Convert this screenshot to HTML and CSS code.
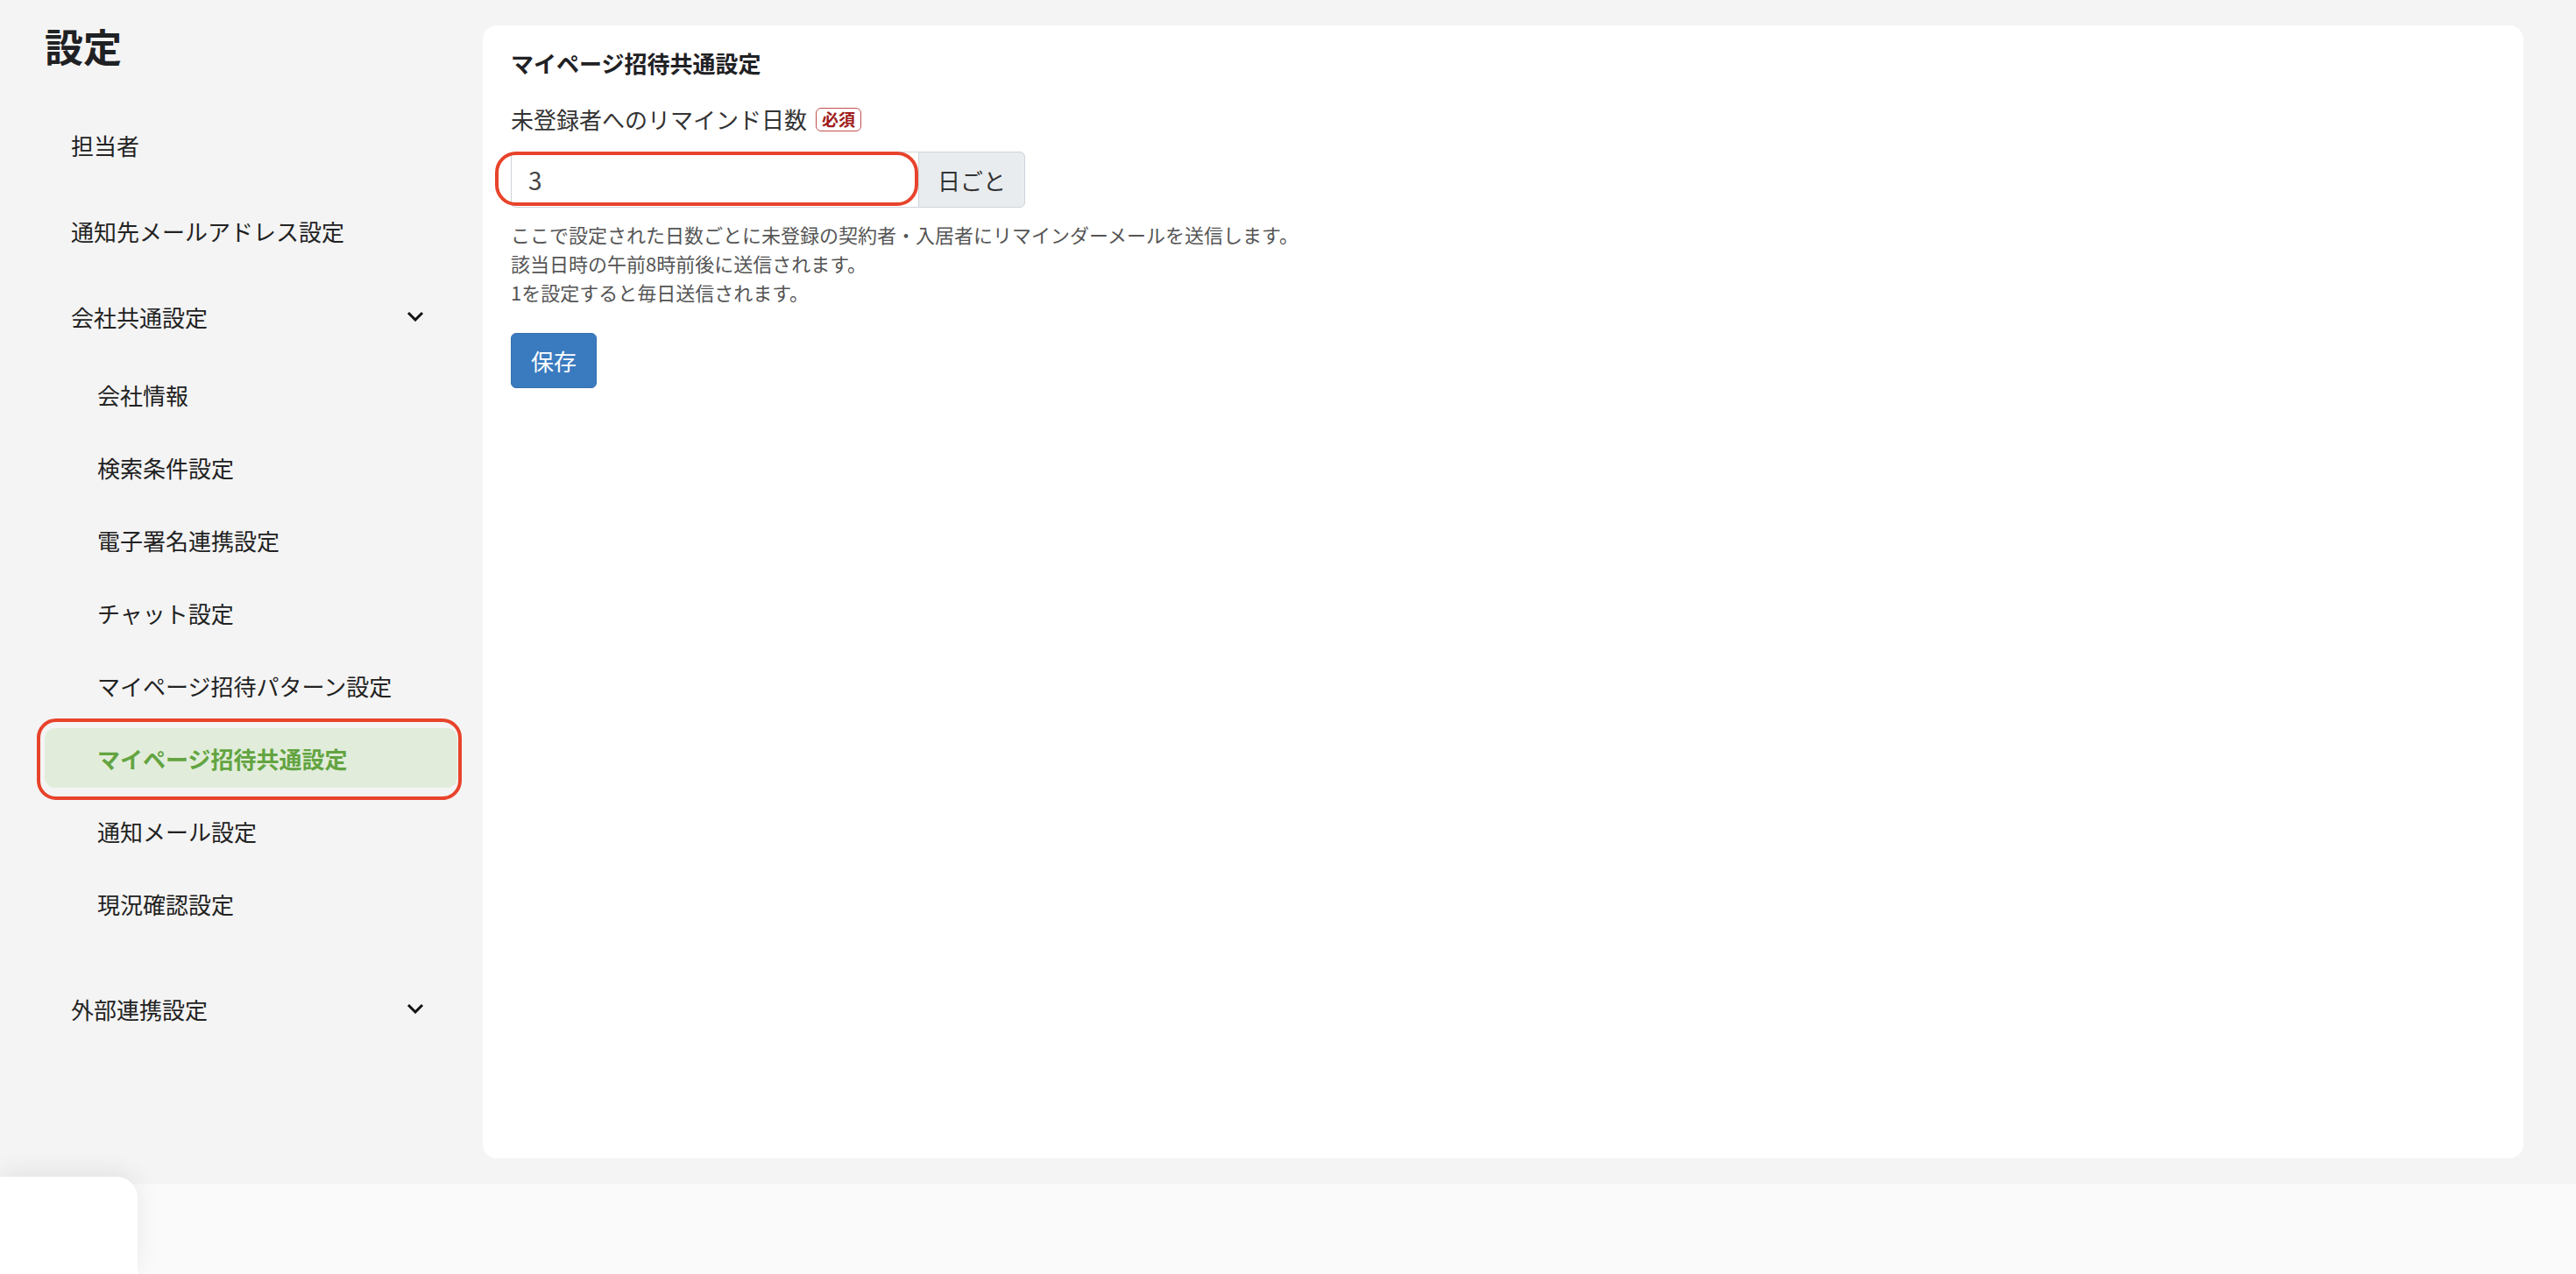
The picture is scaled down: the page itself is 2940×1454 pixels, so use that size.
FILE: index.html
```html
<!DOCTYPE html>
<html lang="ja">

<head>
    <meta charset="utf-8">
    <meta name="viewport" content="width=device-width, initial-scale=1.0">
    <title>設定</title>
    <link rel="stylesheet" href="styles.css">
</head>

<body>
    <div class="layout">
        <aside class="sidebar">
            <h1 class="sidebar-title">設定</h1>
            <ul class="nav">
                <li><a class="nav-item">担当者</a></li>
                <li><a class="nav-item">通知先メールアドレス設定</a></li>
                <li class="nav-group">
                    <a class="nav-item nav-toggle">会社共通設定
                        <svg class="chevron" width="20" height="12" viewBox="0 0 20 12">
                            <polyline points="2,2 10,10 18,2" />
                        </svg>
                    </a>
                    <ul class="subnav">
                        <li><a class="nav-item">会社情報</a></li>
                        <li><a class="nav-item">検索条件設定</a></li>
                        <li><a class="nav-item">電子署名連携設定</a></li>
                        <li><a class="nav-item">チャット設定</a></li>
                        <li><a class="nav-item">マイページ招待パターン設定</a></li>
                        <li><a class="nav-item active">マイページ招待共通設定</a></li>
                        <li><a class="nav-item">通知メール設定</a></li>
                        <li><a class="nav-item">現況確認設定</a></li>
                    </ul>
                </li>
                <li class="nav-group">
                    <a class="nav-item nav-toggle">外部連携設定
                        <svg class="chevron" width="20" height="12" viewBox="0 0 20 12">
                            <polyline points="2,2 10,10 18,2" />
                        </svg>
                    </a>
                </li>
            </ul>
        </aside>

        <main class="content">
            <section class="card">
                <h2 class="card-title">マイページ招待共通設定</h2>

                <div class="field-label">
                    未登録者へのリマインド日数
                    <span class="badge">必須</span>
                </div>

                <div class="input-group">
                    <div class="input-wrap">
                        <input class="input" type="text" value="3">
                    </div>
                    <span class="addon">日ごと</span>
                </div>

                <p class="help">
                    ここで設定された日数ごとに未登録の契約者・入居者にリマインダーメールを送信します。<br>
                    該当日時の午前8時前後に送信されます。<br>
                    1を設定すると毎日送信されます。
                </p>

                <button class="btn">保存</button>
            </section>
        </main>
    </div>

    <footer class="footer">
        <div class="footer-tab"></div>
    </footer>
</body>

</html>
```

FILE: styles.css
```css
html,
body {
    margin: 0;
    height: 100%;
    overflow: hidden;
}

body {
    background-color: #f4f4f4;
    font-family: "Noto Sans CJK JP", "Noto Sans", sans-serif;
    color: #222;
}

.layout {
    display: flex;
    height: 1351px;
}

/* sidebar */

.sidebar {
    width: 551px;
    box-sizing: border-box;
    padding: 30px 29px 0 51px;
    flex-shrink: 0;
}

.sidebar-title {
    margin: 0 0 57px;
    font-size: 44px;
    line-height: 44px;
    font-weight: 700;
    color: #1f2124;
}

.nav,
.subnav {
    list-style: none;
    margin: 0;
    padding: 0;
}

.nav > li {
    margin-bottom: 30px;
}

.nav-item {
    display: flex;
    align-items: center;
    justify-content: space-between;
    height: 68px;
    padding: 0 38px 0 30px;
    border-radius: 12px;
    font-size: 26px;
    color: #222;
    cursor: pointer;
}

.nav-group .nav-toggle {
    margin-bottom: 21px;
}

.chevron {
    fill: none;
    stroke: #111;
    stroke-width: 3;
}

.nav .subnav {
    padding-bottom: 22px;
}

.subnav li {
    margin-bottom: 15px;
}

.subnav li:last-child {
    margin-bottom: 0;
}

.subnav .nav-item {
    padding-left: 60px;
}

.nav-item.active {
    position: relative;
    background-color: #e1edda;
    color: #63a441;
    font-weight: 700;
}

/* red annotation ring */
.nav-item.active::after {
    content: "";
    position: absolute;
    top: -11px;
    bottom: -14px;
    left: -9px;
    right: -5px;
    border: 4px solid #e8432b;
    border-radius: 22px;
}

/* main card */

.content {
    flex: 1;
    display: flex;
    padding: 29px 60px 29px 0;
}

.card {
    flex: 1;
    background-color: #fff;
    border-radius: 16px;
    padding: 25px 32px;
}

.card-title {
    margin: 0;
    font-size: 26px;
    line-height: 36px;
    font-weight: 700;
    color: #1f2124;
}

.field-label {
    display: flex;
    align-items: center;
    margin-top: 28px;
    font-size: 26px;
    line-height: 36px;
    color: #333;
}

.badge {
    box-sizing: border-box;
    height: 27px;
    margin-left: 10px;
    padding: 0 6px;
    border: 1.5px solid #c0504d;
    border-radius: 6px;
    font-size: 19px;
    line-height: 24px;
    font-weight: 700;
    color: #a01c1c;
}

.input-group {
    display: flex;
    margin-top: 19px;
    height: 64px;
}

.input-wrap {
    position: relative;
    width: 465px;
}

.input-wrap::after {
    content: "";
    position: absolute;
    top: 0;
    bottom: 2px;
    left: -18px;
    right: 0;
    border: 4px solid #e8432b;
    border-radius: 24px;
    pointer-events: none;
}

.input {
    box-sizing: border-box;
    width: 100%;
    height: 100%;
    margin: 0;
    padding: 0 19px;
    border: 1px solid #ced4da;
    border-right: none;
    border-radius: 6px 0 0 6px;
    background-color: #fff;
    font-family: inherit;
    font-size: 28px;
    color: #444;
    outline: none;
}

.addon {
    box-sizing: border-box;
    width: 122px;
    display: flex;
    align-items: center;
    justify-content: center;
    background-color: #e9ecef;
    border: 1px solid #ced4da;
    border-radius: 0 6px 6px 0;
    font-size: 26px;
    color: #333;
}

.help {
    margin: 14px 0 0;
    font-size: 22px;
    line-height: 33px;
    color: #555;
}

.btn {
    display: block;
    margin-top: 30px;
    height: 63px;
    padding: 0 22px;
    background-color: #3a7bbf;
    border: 1px solid #3570ad;
    border-radius: 6px;
    font-family: inherit;
    font-size: 26px;
    color: #fff;
}

/* bottom strip */

.footer {
    display: flex;
    align-items: flex-end;
    height: 103px;
    background-color: #fafafa;
}

.footer-tab {
    width: 157px;
    height: 111px;
    margin-top: -8px;
    background-color: #fff;
    border-top-right-radius: 24px;
    box-shadow: 0 -6px 28px rgba(0, 0, 0, 0.07);
}
```
